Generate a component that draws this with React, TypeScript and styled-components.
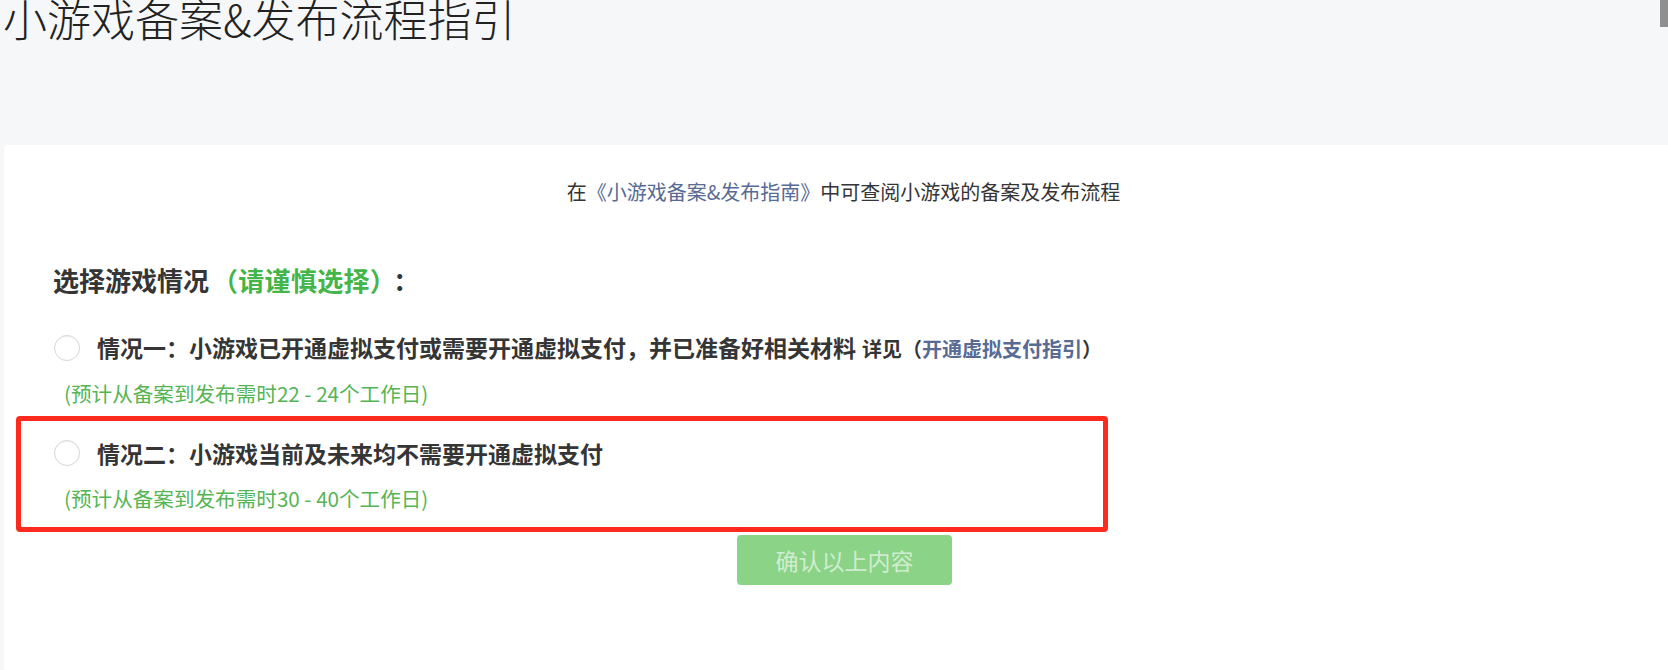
import React from "react";
import styled, { createGlobalStyle } from "styled-components";

const GlobalStyle = createGlobalStyle`
  html, body {
    margin: 0;
    padding: 0;
    background: #f6f7f9;
    overflow: hidden;
  }
  body {
    font-family: "Noto Sans CJK SC", "Noto Sans", sans-serif;
    color: #353535;
  }
`;

const Page = styled.div`
  width: 1683px;
  min-height: 670px;
`;

const Header = styled.header`
  height: 145px;
  padding-left: 3px;
  overflow: hidden;
`;

const Title = styled.h1`
  margin: -4px 0 0;
  font-size: 44px;
  line-height: 44px;
  font-weight: 300;
  color: #222;
`;

const Card = styled.main`
  position: relative;
  margin-left: 4px;
  width: 1679px;
  min-height: 525px;
  background: #fff;
  border-radius: 4px 4px 0 0;
`;

const Intro = styled.p`
  margin: 0;
  padding-top: 32px;
  text-align: center;
  font-size: 20px;
  line-height: 30px;
  color: #353535;
`;

const Link = styled.a<{ $bold?: boolean }>`
  color: #576b95;
  text-decoration: none;
  font-weight: ${(p) => (p.$bold ? 700 : 400)};
`;

const Section = styled.section`
  padding-left: 49px;
`;

const Heading = styled.h2`
  margin: 55px 0 0;
  font-size: 26px;
  line-height: 36px;
  font-weight: 700;
  color: #353535;
`;

const Accent = styled.span`
  color: #44b549;
  padding: 0 10px 0 3px;
  letter-spacing: 0.3px;
`;

const OptionRow = styled.label<{ $top: number }>`
  display: flex;
  align-items: center;
  gap: 17px;
  margin-top: ${(p) => p.$top}px;
  padding-left: 1px;
  cursor: pointer;
`;

const Radio = styled.span`
  flex: none;
  width: 26px;
  height: 26px;
  box-sizing: border-box;
  border-radius: 50%;
  border: 1px solid #d6d6d6;
  background: #fff;
  box-shadow: inset 0 1px 1px rgba(0, 0, 0, 0.05);
`;

const OptionText = styled.span`
  font-size: 23px;
  line-height: 34px;
  font-weight: 700;
  color: #353535;
  white-space: nowrap;
`;

const Aside = styled.span`
  font-size: 20px;
  margin-left: 6px;
`;

const Estimate = styled.p<{ $top: number }>`
  margin: ${(p) => p.$top}px 0 0 11px;
  font-size: 20.6px;
  line-height: 30px;
  color: #55b554;
`;

const Actions = styled.div`
  display: flex;
  justify-content: center;
  padding-top: 22px;
  padding-bottom: 40px;
`;

const ConfirmButton = styled.button`
  width: 215px;
  height: 50px;
  margin-left: 2px;
  border: none;
  border-radius: 4px;
  background: #8bd387;
  color: rgba(255, 255, 255, 0.62);
  font-family: "Noto Sans CJK SC", sans-serif;
  font-size: 23px;
  cursor: not-allowed;
`;

const Highlight = styled.div`
  position: absolute;
  left: 12px;
  top: 271px;
  width: 1092px;
  height: 116px;
  box-sizing: border-box;
  border: 5px solid #ff2a1e;
  border-radius: 4px;
  pointer-events: none;
`;

const ScrollThumb = styled.div`
  position: fixed;
  top: 0;
  right: 0;
  width: 8px;
  height: 27px;
  background: #8e8f8e;
`;

export default function App() {
  return (
    <>
      <GlobalStyle />
      <Page>
        <Header>
          <Title>小游戏备案&amp;发布流程指引</Title>
        </Header>
        <Card>
          <Intro>
            在<Link href="#">《小游戏备案&amp;发布指南》</Link>中可查阅小游戏的备案及发布流程
          </Intro>
          <Section>
            <Heading>
              选择游戏情况<Accent>（请谨慎选择）</Accent>：
            </Heading>
            <OptionRow $top={32}>
              <Radio />
              <OptionText>
                情况一：小游戏已开通虚拟支付或需要开通虚拟支付，并已准备好相关材料
                <Aside>
                  详见（<Link href="#" $bold>开通虚拟支付指引</Link>）
                </Aside>
              </OptionText>
            </OptionRow>
            <Estimate $top={12}>(预计从备案到发布需时22 - 24个工作日)</Estimate>
            <OptionRow $top={28}>
              <Radio />
              <OptionText>情况二：小游戏当前及未来均不需要开通虚拟支付</OptionText>
            </OptionRow>
            <Estimate $top={13}>(预计从备案到发布需时30 - 40个工作日)</Estimate>
          </Section>
          <Actions>
            <ConfirmButton disabled>确认以上内容</ConfirmButton>
          </Actions>
          <Highlight />
        </Card>
        <ScrollThumb />
      </Page>
    </>
  );
}
